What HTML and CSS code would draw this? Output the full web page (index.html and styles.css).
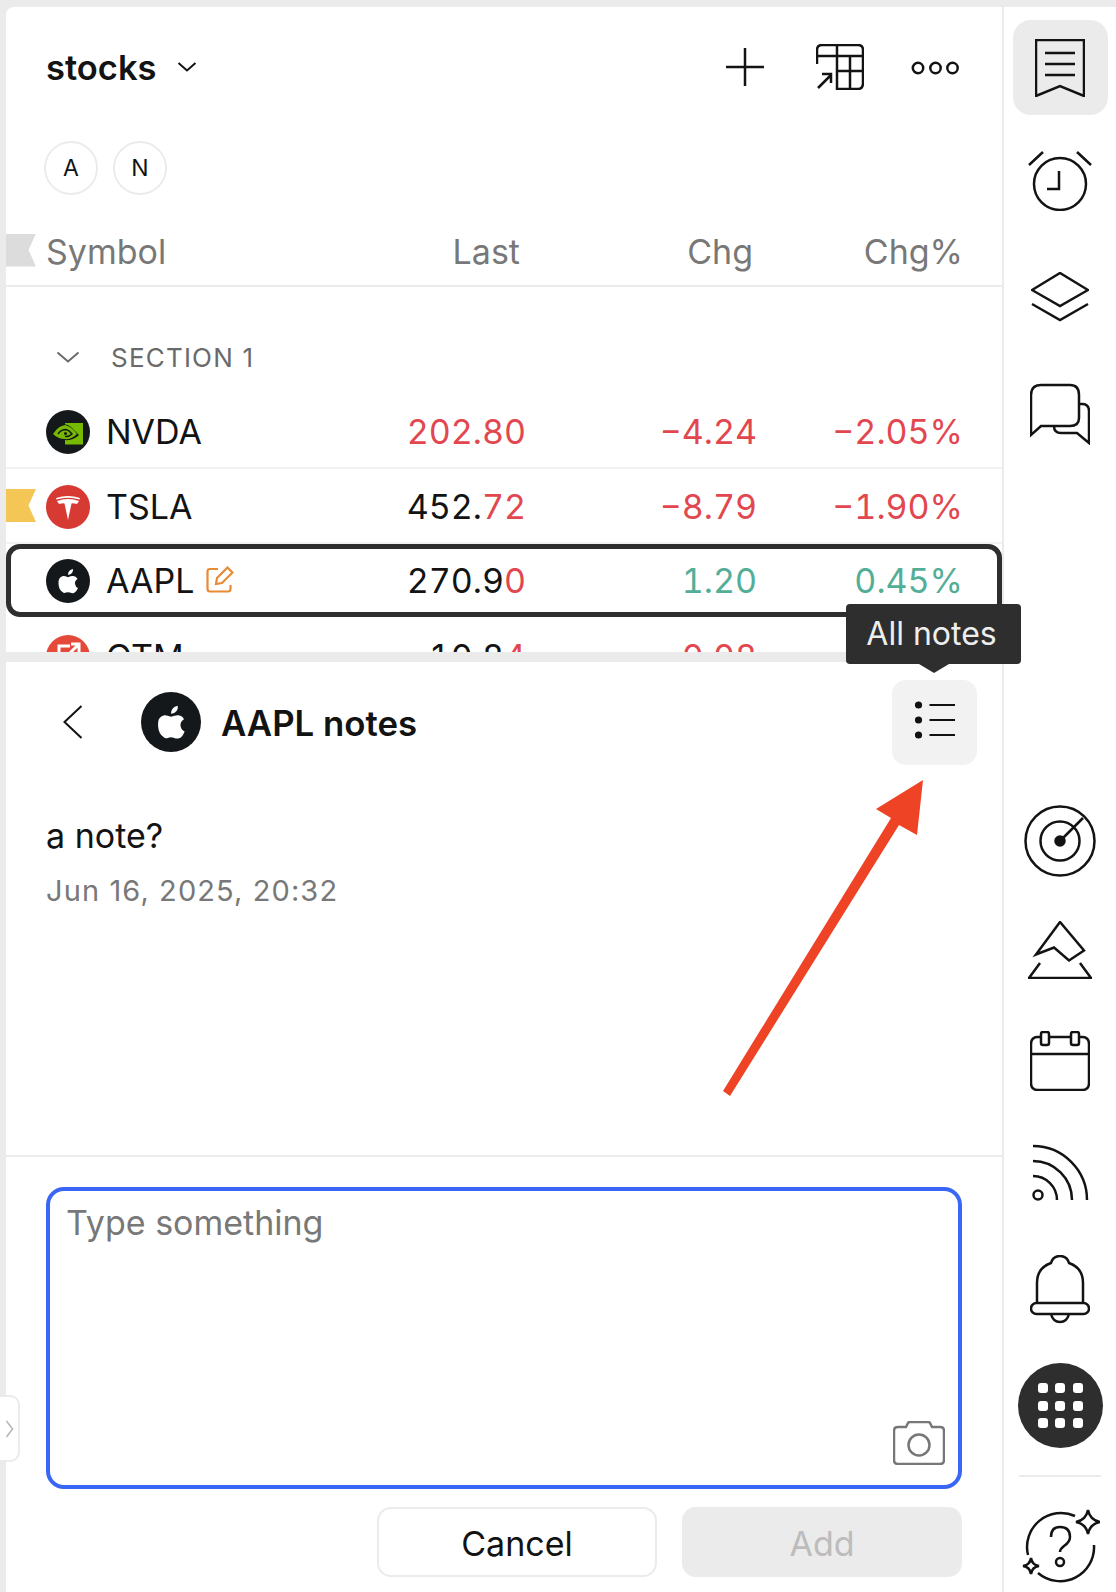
FILE: index.html
```html
<!DOCTYPE html>
<html lang="en">
<head>
  <meta charset="UTF-8">
  <title>AAPL notes</title>
  <link rel="stylesheet" href="styles.css">
</head>
<body>
  <div class="app">
    <div class="main">

      <!-- Watchlist -->
      <section class="watchlist">
        <div class="list-head">
          <div class="list-title">
            <span>stocks</span>
            <svg class="title-caret" width="20" height="12" viewBox="0 0 20 12"><path d="M1.5 2 L10 9.5 L18.5 2"/></svg>
          </div>
          <div class="list-tools">
            <svg class="ico ico-plus" width="38" height="38" viewBox="0 0 38 38"><path d="M19 0V38M0 19H38"/></svg>
            <svg class="ico" width="48" height="46" viewBox="0 0 48 46"><path d="M1 20V6Q1 1 6 1H42Q47 1 47 6V39Q47 45 42 45H21V1M1 12H47M21 27H47M34 12V45M2 44L15 31M6 30H15V39"/></svg>
            <svg class="ico ico-more" width="48" height="14" viewBox="0 0 48 14"><circle cx="7" cy="7" r="5.2"/><circle cx="24.5" cy="7" r="5.2"/><circle cx="41.5" cy="7" r="5.2"/></svg>
          </div>
        </div>

        <div class="chips">
          <span class="chip">A</span>
          <span class="chip">N</span>
        </div>

        <div class="row col-head">
          <i class="flag flag-gray"></i>
          <span class="sym-head">Symbol</span>
          <span class="num hd">Last</span>
          <span class="num hd">Chg</span>
          <span class="num">Chg%</span>
        </div>

        <div class="section-row">
          <svg class="section-caret" width="24" height="12" viewBox="0 0 24 12"><path d="M1.5 1.5 L12 10.5 L22.5 1.5"/></svg>
          <span>SECTION 1</span>
        </div>

        <div class="row stock">
          <svg class="logo" viewBox="0 0 44 44">
            <circle cx="22" cy="22" r="22" fill="#15181b"/>
            <path fill="#76b900" d="M19 13H37V34.500H19V30Q27 31 33 25L26 18Q22 14 19 14.500Z"/>
            <path fill="#76b900" d="M7 24Q12 16 19 15Q25 16 31 24Q25 30 19 29Q12 29 7 24Z"/>
            <path fill="none" stroke="#15181b" stroke-width="1.500" d="M12 24Q15 19.500 20 19.500Q23 20 26 24Q23 27 19 26.500"/>
            <circle cx="19.500" cy="23.500" r="1.500" fill="#15181b"/>
          </svg>
          <span class="sym">NVDA</span>
          <span class="num red">202.80</span>
          <span class="num red">−4.24</span>
          <span class="num red">−2.05%</span>
        </div>

        <div class="row stock">
          <i class="flag flag-yellow"></i>
          <svg class="logo" viewBox="0 0 44 44">
            <circle cx="22" cy="22" r="22" fill="#d63a33"/>
            <path fill="#fff" d="M10 13Q22 9 34 13L33.500 14.500Q22 11 10.500 14.500Z"/>
            <path fill="#fff" d="M11 16Q22 12 33 16L31 19Q27 18 25.500 18.500L22 35L18.500 18.500Q17 18 13 19Z"/>
          </svg>
          <span class="sym">TSLA</span>
          <span class="num">452.<b class="red">72</b></span>
          <span class="num red">−8.79</span>
          <span class="num red">−1.90%</span>
        </div>

        <div class="row stock selected">
          <svg class="logo" viewBox="0 0 44 44">
            <circle cx="22" cy="22" r="22" fill="#15181b"/>
            <path fill="#fff" d="M16.500 33Q13 31 12.500 25Q12 18 17 17Q19 16.800 22 18.200Q25 16.800 27.500 17Q30.500 17.500 31.500 20Q28.500 22 29 25Q29.500 28 32 29Q30.500 33 28 34Q26 34.500 24 33.500Q22 32.800 20 33.500Q18 34.500 16.500 33Z"/>
            <path fill="#fff" d="M22 16Q22 11 27 10Q27.500 15 22 16Z"/>
          </svg>
          <span class="sym">AAPL</span>
          <svg class="note-ico" width="28" height="28" viewBox="0 0 28 28"><path d="M12 4H4Q1.500 4 1.500 6.500V24Q1.500 26.500 4 26.500H22Q24.500 26.500 24.500 24V20"/><path d="M10 19L11 13L21.500 2.500L26.500 7.500L16 18Z"/></svg>
          <span class="num">270.9<b class="red">0</b></span>
          <span class="num green">1.20</span>
          <span class="num green">0.45%</span>
        </div>

        <div class="row stock">
          <svg class="logo" viewBox="0 0 44 44">
            <circle cx="22" cy="22" r="22" fill="#e5493a"/>
            <path fill="none" stroke="#fff" stroke-width="3" d="M24 11H13V33H31V22M20 22L32 10M25 9H33V17"/>
          </svg>
          <span class="sym">OTM</span>
          <span class="num">10.8<b class="red">4</b></span>
          <span class="num red">0.08</span>
          <span class="num"></span>
        </div>
      </section>

      <!-- Notes -->
      <section class="notes">
        <div class="notes-head">
          <svg class="back" width="20" height="34" viewBox="0 0 20 34"><path d="M18.500 1L1.500 17L18.500 33"/></svg>
          <svg class="notes-logo" viewBox="0 0 44 44">
            <circle cx="22" cy="22" r="22" fill="#15181b"/>
            <path fill="#fff" d="M16.500 33Q13 31 12.500 25Q12 18 17 17Q19 16.800 22 18.200Q25 16.800 27.500 17Q30.500 17.500 31.500 20Q28.500 22 29 25Q29.500 28 32 29Q30.500 33 28 34Q26 34.500 24 33.500Q22 32.800 20 33.500Q18 34.500 16.500 33Z"/>
            <path fill="#fff" d="M22 16Q22 11 27 10Q27.500 15 22 16Z"/>
          </svg>
          <h2 class="notes-title">AAPL notes</h2>
          <button class="all-notes" type="button">
            <svg width="40" height="38" viewBox="0 0 40 38">
              <circle cx="3.500" cy="4" r="3.600" fill="#111"/><circle cx="3.500" cy="19" r="3.600" fill="#111"/><circle cx="3.500" cy="34" r="3.600" fill="#111"/>
              <path stroke="#111" stroke-width="2" d="M14.500 4H40M14.500 19H40M14.500 34H40"/>
            </svg>
          </button>
          <div class="tooltip">All notes</div>
        </div>

        <div class="note">
          <div class="note-text">a note?</div>
          <div class="note-date">Jun 16, 2025, 20:32</div>
        </div>

        <div class="composer">
          <div class="input-box">
            <span class="placeholder">Type something</span>
            <svg class="camera" width="52" height="44" viewBox="0 0 52 44"><path d="M5 6H13L15 2Q15.500 1 17 1H35Q36.500 1 37 2L39 6H47Q51 6 51 10V39Q51 43 47 43H5Q1 43 1 39V10Q1 6 5 6Z"/><circle cx="26" cy="24" r="10.500"/></svg>
          </div>
          <div class="composer-actions">
            <button class="btn btn-cancel" type="button">Cancel</button>
            <button class="btn btn-add" type="button">Add</button>
          </div>
        </div>
      </section>

      <div class="collapse-handle">
        <svg width="9" height="18" viewBox="0 0 9 18"><path d="M1.500 1L7.500 9L1.500 17"/></svg>
      </div>
    </div>

    <!-- Right toolbar -->
    <nav class="side">
      <div class="side-top">
        <a class="side-btn active">
          <svg width="50" height="58" viewBox="0 0 50 58"><path d="M1 1H49V57L25 47L1 57ZM10 14H40M10 25H40M10 36H40"/></svg>
        </a>
        <a class="side-btn alarm">
          <svg width="64" height="60" viewBox="0 0 64 60"><circle cx="32" cy="33" r="26"/><path d="M1 14L15 1M63 14L49 1M31 20V38H19"/></svg>
        </a>
        <a class="side-btn layers">
          <svg width="58" height="50" viewBox="0 0 58 50"><path d="M29 1L57 18L29 34L1 18ZM1 32L29 48L57 32"/></svg>
        </a>
        <a class="side-btn chat">
          <svg width="60" height="62" viewBox="0 0 60 62"><path d="M1 48V12Q1 2 11 2H40Q49 2 49 12V35Q49 43 40 43H11L1 52Z"/><path d="M49 21H52Q59 21 59 28V60L47 50H31Q24 50 24 43"/></svg>
        </a>
      </div>
      <div class="side-bottom">
        <a class="side-btn">
          <svg width="72" height="72" viewBox="0 0 72 72"><circle cx="36" cy="36" r="34.500"/><circle cx="36" cy="36" r="19.500"/><circle class="solid" cx="36" cy="36" r="4.500"/><path d="M36 36L59 13"/></svg>
        </a>
        <a class="side-btn peak">
          <svg width="64" height="58" viewBox="0 0 64 58"><path d="M8 33.500L32 1L56 29.500L41 39.500L26 26.500Z"/><path d="M12 42L1 57H63L52 42"/></svg>
        </a>
        <a class="side-btn cal">
          <svg width="60" height="60" viewBox="0 0 60 60"><path d="M19 6H41M49 6H52Q59 6 59 13V52Q59 59 52 59H8Q1 59 1 52V13Q1 6 8 6H11M1 23H59"/><rect x="11" y="1" width="8" height="13" rx="2"/><rect x="41" y="1" width="8" height="13" rx="2"/></svg>
        </a>
        <a class="side-btn rss">
          <svg width="58" height="58" viewBox="0 0 58 58"><path d="M2 2A54 54 0 0 1 56 56M2 17A39 39 0 0 1 41 56M2 32A24 24 0 0 1 26 56"/><circle cx="7" cy="51" r="4.500"/></svg>
        </a>
        <a class="side-btn bell">
          <svg width="60" height="70" viewBox="0 0 60 70"><path d="M7 48V28Q7 13 21 8Q23 1 30 1Q37 1 39 8Q53 13 53 28V48"/><rect x="1" y="48" width="58" height="11" rx="5.500"/><path d="M21 59Q23 67 30 67Q37 67 39 59"/></svg>
        </a>
        <a class="side-btn apps">
          <span class="dots"><i></i><i></i><i></i><i></i><i></i><i></i><i></i><i></i><i></i></span>
        </a>
        <div class="side-sep"></div>
        <a class="side-btn help">
          <svg width="80" height="76" viewBox="0 0 80 76"><path d="M55 7A34 34 0 0 0 8 46M18 64A34 34 0 0 0 74 36"/><path d="M31 28Q31 18 40 18Q50 18 50 28Q50 33 44 37Q40 40 40 43"/><circle cx="40" cy="53" r="4"/><path d="M68 1Q70 11 80 13Q70 15 68 25Q66 15 56 13Q66 11 68 1Z"/><path d="M11 49Q12 56 19 57Q12 58 11 65Q10 58 3 57Q10 56 11 49Z"/></svg>
        </a>
      </div>
    </nav>

    <!-- Annotation arrow -->
    <svg class="annotation" width="1116" height="1592" viewBox="0 0 1116 1592"><path fill="#ee4324" d="M923 780L876 809L891 818L723 1091L730 1096L899 825L917 835Z"/></svg>
  </div>
</body>
</html>
```

FILE: styles.css
```css
* {
  box-sizing: border-box;
}

body {
  margin: 0;
  background: #ebebeb;
  font-family: Inter, "Liberation Sans", sans-serif;
  color: #131313;
}

svg {
  display: block;
  flex: none;
}

/* Page frame */
.app {
  position: relative;
  display: flex;
  width: 1116px;
  height: 1592px;
  padding-top: 7px;
  padding-left: 6px;
  overflow: hidden;
}

.main {
  position: relative;
  display: flex;
  flex-direction: column;
  gap: 10px;
  width: 996px;
  flex: none;
}

/* Watchlist */
.watchlist {
  height: 645px;
  background: #fff;
  border-top-left-radius: 8px;
  overflow: hidden;
}

.list-head {
  display: flex;
  align-items: center;
  justify-content: space-between;
  height: 134px;
  padding: 0 43px 14px 40px;
}

.list-title {
  display: flex;
  align-items: center;
  gap: 20px;
  font-size: 34.500px;
  font-weight: 600;
}

.title-caret path,
.section-caret path,
.back path {
  fill: none;
  stroke: #131313;
  stroke-width: 2;
}

.section-caret path {
  stroke: #6a6a6a;
}

.list-tools {
  display: flex;
  align-items: center;
  gap: 47px;
}

.ico {
  fill: none;
  stroke: #131313;
  stroke-width: 2.500;
}

.ico-plus {
  margin-right: 5px;
}

.ico-more {
  margin-top: 2px;
}

.chips {
  display: flex;
  gap: 15px;
  padding-left: 38px;
}

.chip {
  display: flex;
  align-items: center;
  justify-content: center;
  width: 54px;
  height: 54px;
  margin-bottom: -1px;
  border: 2px solid #ebebeb;
  border-radius: 50%;
  font-size: 23px;
}

/* Table rows */
.row {
  position: relative;
  display: grid;
  align-items: center;
  padding: 0 39px 0 40px;
  font-size: 34px;
}

.num {
  text-align: right;
  font-variant-numeric: tabular-nums;
  white-space: nowrap;
}

.num b {
  font-weight: 400;
}

.col-head {
  grid-template-columns: 1fr 180px 233px 206px;
  height: 72px;
  margin-top: 21px;
  padding-top: 2px;
  padding-left: 40px;
  border-bottom: 2px solid #ebebeb;
  color: #787878;
}

.hd {
  padding-right: 4px;
}

.flag {
  position: absolute;
  left: 0;
  width: 30px;
  height: 33px;
  clip-path: polygon(0 0, 100% 0, 75% 50%, 100% 100%, 0 100%);
}

.flag-gray {
  background: #dcdcdc;
}

.flag-yellow {
  background: #f4c655;
}

.section-row {
  display: flex;
  align-items: center;
  gap: 31px;
  height: 72px;
  margin-top: 34px;
  margin-bottom: 1px;
  padding-left: 50px;
  font-size: 26px;
  letter-spacing: 1.200px;
  color: #6a6a6a;
}

.stock {
  grid-template-columns: 60px 1fr 160px 231px 206px;
  height: 75px;
  padding-top: 2px;
  border-bottom: 2px solid #f2f2f2;
}

.stock .note-ico {
  grid-column: 2;
  grid-row: 1;
  margin-left: 100px;
  margin-top: -4px;
  fill: none;
  stroke: #e98a35;
  stroke-width: 2.200;
}

.stock .sym {
  grid-column: 2;
  grid-row: 1;
}

.logo {
  width: 44px;
  height: 44px;
}

.selected {
  height: 73px;
  margin-bottom: 2px;
  padding-top: 0;
  outline: 5px solid #2e2e2e;
  outline-offset: -5px;
  border-radius: 14px;
  border-bottom: 0;
}

.red {
  color: #e2474f;
}

.green {
  color: #53ae98;
}

/* Notes panel */
.notes {
  display: flex;
  flex-direction: column;
  flex: 1;
  background: #fff;
}

.notes-head {
  position: relative;
  display: flex;
  align-items: center;
  height: 120px;
  padding: 0 25px 0 57px;
}

.notes-logo {
  width: 60px;
  height: 60px;
  margin-left: 58px;
}

.notes-title {
  margin: 2px 0 0 20px;
  font-size: 34.800px;
  font-weight: 600;
}

.all-notes {
  display: flex;
  align-items: center;
  justify-content: center;
  width: 85px;
  height: 85px;
  margin-left: auto;
  padding: 0 0 4px;
  border: 0;
  border-radius: 14px;
  background: #f2f2f2;
}

.tooltip {
  position: absolute;
  top: -58px;
  left: 840px;
  width: 175px;
  height: 60px;
  padding-right: 4px;
  border-radius: 4px;
  background: #2e2e2e;
  color: #eee;
  font-size: 32px;
  line-height: 60px;
  text-align: center;
}

.tooltip::after {
  content: "";
  position: absolute;
  left: 73px;
  top: 60px;
  border-top: 9px solid #2e2e2e;
  border-left: 15px solid transparent;
  border-right: 15px solid transparent;
}

.note {
  flex: 1;
  padding: 31px 40px 0;
}

.note-text {
  font-size: 34px;
  line-height: 46px;
}

.note-date {
  margin-top: 14px;
  font-size: 29px;
  letter-spacing: 1.100px;
  color: #787878;
}

.composer {
  height: 437px;
  padding: 30px 40px 0;
  border-top: 2px solid #ebebeb;
}

.input-box {
  position: relative;
  height: 302px;
  padding: 11px 16px;
  border: 4px solid #3a66f5;
  border-radius: 18px;
}

.placeholder {
  font-size: 34px;
  color: #787878;
}

.camera {
  position: absolute;
  right: 13px;
  bottom: 20px;
  fill: none;
  stroke: #777;
  stroke-width: 2.500;
}

.composer-actions {
  display: flex;
  justify-content: flex-end;
  gap: 25px;
  margin-top: 18px;
}

.btn {
  width: 280px;
  height: 70px;
  padding-top: 3px;
  border-radius: 14px;
  font-family: inherit;
  font-size: 34px;
}

.btn-cancel {
  border: 2px solid #ebebeb;
  background: #fff;
  color: #131313;
}

.btn-add {
  border: 0;
  background: #ebebeb;
  color: #bcbcbc;
}

.collapse-handle {
  position: absolute;
  left: -6px;
  top: 1388px;
  display: flex;
  align-items: center;
  justify-content: center;
  width: 20px;
  height: 67px;
  border: 2px solid #ebebeb;
  border-left: 0;
  border-radius: 0 10px 10px 0;
  background: #fff;
}

.collapse-handle path {
  fill: none;
  stroke: #b5b5b5;
  stroke-width: 1.500;
}

/* Right toolbar */
.side {
  display: flex;
  flex-direction: column;
  justify-content: space-between;
  flex: 1;
  margin-left: 2px;
  background: #fff;
}

.side-top,
.side-bottom {
  display: flex;
  flex-direction: column;
  align-items: center;
}

.side-top {
  gap: 20px;
  padding-top: 13px;
}

.side-bottom {
  padding-bottom: 14px;
}

.side-btn {
  display: flex;
  align-items: center;
  justify-content: center;
  width: 95px;
  height: 95px;
}

.side-btn svg {
  fill: none;
  stroke: #131313;
  stroke-width: 2.500;
}

.side-btn .solid {
  fill: #131313;
}

.active {
  border-radius: 18px;
  background: #ebebeb;
}

.alarm {
  margin-top: -2px;
}

.layers {
  margin-top: 1px;
}

.chat {
  margin-top: 2px;
}

.side-bottom .side-btn {
  height: 62px;
}

.side-bottom .peak {
  margin-top: 47px;
}

.side-bottom .cal {
  margin-top: 49px;
}

.side-bottom .rss {
  margin-top: 50px;
}

.side-bottom .bell {
  margin-top: 55px;
}

.side-bottom .apps {
  width: 85px;
  height: 85px;
  margin-top: 42px;
  border-radius: 50%;
  background: #2e2e2e;
}

.dots {
  display: grid;
  grid-template-columns: repeat(3, 10px);
  gap: 7.500px;
}

.dots i {
  width: 10px;
  height: 10px;
  border-radius: 3px;
  background: #fff;
}

.side-sep {
  width: 82px;
  height: 2px;
  margin: 27px 0 39px;
  background: #ebebeb;
}

.annotation {
  position: absolute;
  left: 0;
  top: 0;
  pointer-events: none;
}
```
